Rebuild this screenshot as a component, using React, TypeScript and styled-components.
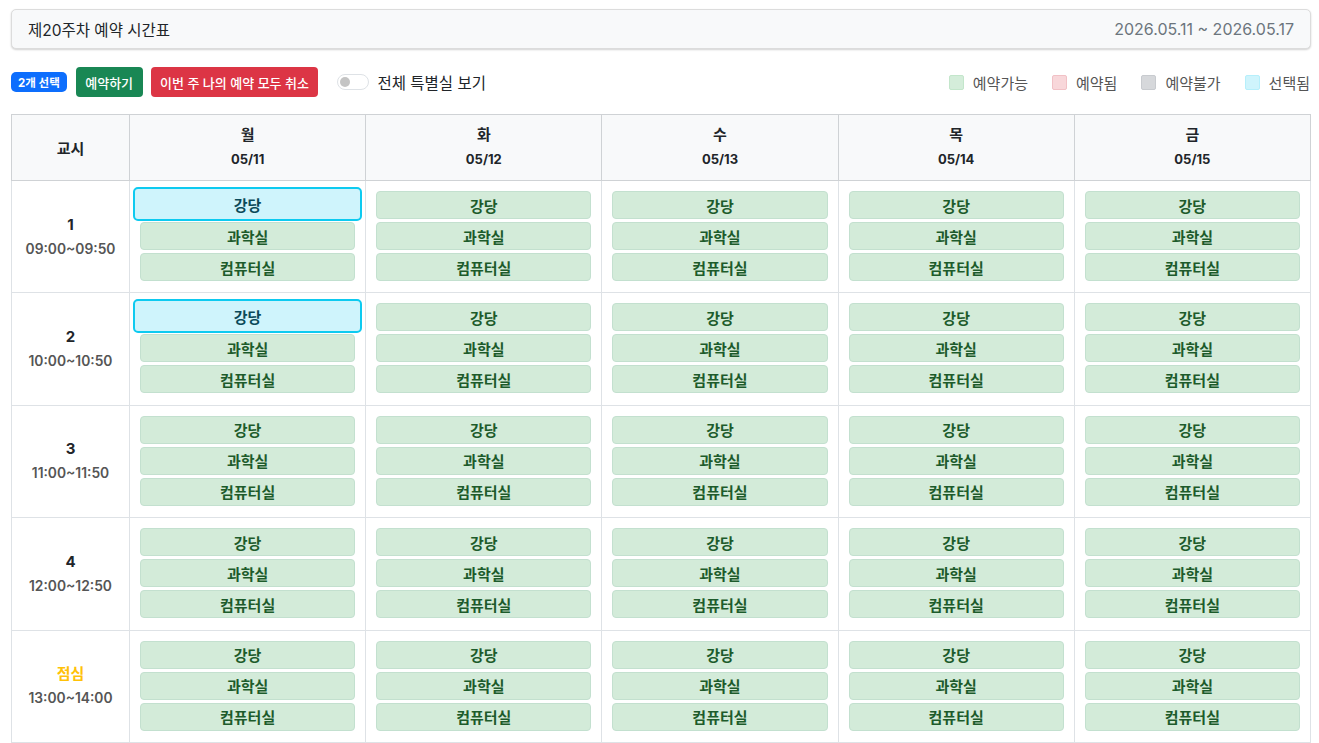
import styled, { createGlobalStyle } from 'styled-components';

const GlobalStyle = createGlobalStyle`
  body {
    margin: 0;
    background: #fff;
    font-family: Inter, 'Noto Sans CJK KR', sans-serif;
    color: #212529;
  }
`;

const Page = styled.div`
  padding: 9px 8px 0 11px;
`;

const HeaderCard = styled.div`
  height: 40px;
  box-sizing: border-box;
  display: flex;
  align-items: center;
  justify-content: space-between;
  padding: 0 16px;
  background: #f8f9fa;
  border: 1px solid #dcdcdc;
  border-radius: 5px;
  box-shadow: 0 1px 2px rgba(0, 0, 0, 0.18);
  .title {
    font-size: 15.5px;
    color: #212529;
  }
  .range {
    font-size: 16px;
    color: #6c757d;
  }
`;

const Toolbar = styled.div`
  margin-top: 18px;
  height: 30px;
  display: flex;
  align-items: center;
  justify-content: space-between;
`;

const Actions = styled.div`
  display: flex;
  align-items: center;
`;

const Badge = styled.span`
  height: 20px;
  padding: 0 7px;
  display: inline-flex;
  align-items: center;
  background: #0d6efd;
  color: #fff;
  font-size: 11.5px;
  font-weight: 700;
  border-radius: 5px;
  margin-right: 9px;
`;

const ActionButton = styled.button<{ $tone: 'success' | 'danger' }>`
  height: 30px;
  padding: 0 9.5px;
  border: 0;
  border-radius: 4px;
  font-family: inherit;
  font-size: 13px;
  font-weight: 500;
  color: #fff;
  background: ${(p) => (p.$tone === 'success' ? '#198754' : '#dc3545')};
  margin-right: 8px;
  cursor: pointer;
`;

const SwitchLabel = styled.label`
  display: flex;
  align-items: center;
  margin-left: 11px;
  font-size: 15.5px;
  color: #212529;
  .track {
    width: 32px;
    height: 16px;
    box-sizing: border-box;
    border: 1px solid #dee2e6;
    border-radius: 8px;
    display: flex;
    align-items: center;
    padding-left: 2px;
    margin-right: 8px;
  }
  .knob {
    width: 10px;
    height: 10px;
    border-radius: 50%;
    background: #c4c4c4;
  }
`;

const Legend = styled.div`
  display: flex;
  align-items: center;
  gap: 24px;
  padding-right: 1px;
`;

const LegendItem = styled.div<{ $bg: string; $border: string }>`
  display: flex;
  align-items: center;
  font-size: 15px;
  color: #555;
  &::before {
    content: '';
    width: 15px;
    height: 15px;
    box-sizing: border-box;
    background: ${(p) => p.$bg};
    border: 1px solid ${(p) => p.$border};
    border-radius: 2px;
    margin-right: 9px;
  }
`;

const Table = styled.table`
  margin-top: 17px;
  width: 1300px;
  border-collapse: collapse;
  table-layout: fixed;
  th,
  td {
    border: 1px solid #dee2e6;
  }
  thead th {
    background: #f8f9fa;
    border-color: #cfd2d5;
    padding: 8px 0;
    text-align: center;
    font-size: 15px;
    font-weight: 700;
    color: #212529;
  }
`;

const DayName = styled.div`
  line-height: 24px;
  font-size: 15px;
`;

const DayDate = styled.div`
  line-height: 25px;
  font-size: 13px;
`;

const PeriodCell = styled.td`
  text-align: center;
  vertical-align: middle;
`;

const PeriodName = styled.div<{ $lunch?: boolean }>`
  font-size: 15px;
  font-weight: 700;
  line-height: 24px;
  color: ${(p) => (p.$lunch ? '#ffc107' : '#212529')};
`;

const PeriodTime = styled.div`
  font-size: 13.8px;
  font-weight: 600;
  color: #555;
  line-height: 24px;
`;

const SlotCell = styled.td`
  padding: 10px 10px 11px;
  height: 112.4px;
  box-sizing: border-box;
  vertical-align: top;
`;

const RoomList = styled.div`
  display: flex;
  flex-direction: column;
  gap: 3px;
`;

const RoomButton = styled.button<{ $selected?: boolean }>`
  height: ${(p) => (p.$selected ? '34px' : '28px')};
  margin: ${(p) => (p.$selected ? '-4px -7px -2px' : '0')};
  padding: 0;
  position: relative;
  box-sizing: border-box;
  border: ${(p) => (p.$selected ? '2px solid #0dcaf0' : '1px solid #c3e0cf')};
  border-radius: ${(p) => (p.$selected ? '5px' : '4px')};
  background: ${(p) => (p.$selected ? '#cff4fc' : '#d3ebd9')};
  color: ${(p) => (p.$selected ? '#0b4a5a' : '#1d5b2b')};
  font-family: inherit;
  font-size: 15px;
  font-weight: 700;
  cursor: pointer;
`;

const days = [
  { name: '월', date: '05/11' },
  { name: '화', date: '05/12' },
  { name: '수', date: '05/13' },
  { name: '목', date: '05/14' },
  { name: '금', date: '05/15' },
];

const periods = [
  { name: '1', time: '09:00~09:50' },
  { name: '2', time: '10:00~10:50' },
  { name: '3', time: '11:00~11:50' },
  { name: '4', time: '12:00~12:50' },
  { name: '점심', time: '13:00~14:00', lunch: true },
];

const rooms = ['강당', '과학실', '컴퓨터실'];

const selected = new Set(['0-0-0', '1-0-0']);

const App = () => {
  return (
    <Page>
      <GlobalStyle />
      <HeaderCard>
        <span className='title'>제20주차 예약 시간표</span>
        <span className='range'>2026.05.11 ~ 2026.05.17</span>
      </HeaderCard>
      <Toolbar>
        <Actions>
          <Badge>2개 선택</Badge>
          <ActionButton type='button' $tone='success'>
            예약하기
          </ActionButton>
          <ActionButton type='button' $tone='danger'>
            이번 주 나의 예약 모두 취소
          </ActionButton>
          <SwitchLabel>
            <span className='track'>
              <span className='knob' />
            </span>
            전체 특별실 보기
          </SwitchLabel>
        </Actions>
        <Legend>
          <LegendItem $bg='#d4edda' $border='#c3e6cb'>예약가능</LegendItem>
          <LegendItem $bg='#f8d7da' $border='#f1c1c6'>예약됨</LegendItem>
          <LegendItem $bg='#d6d8db' $border='#c8cbcf'>예약불가</LegendItem>
          <LegendItem $bg='#cff4fc' $border='#b6effb'>선택됨</LegendItem>
        </Legend>
      </Toolbar>
      <Table>
        <colgroup>
          <col style={{ width: 118 }} />
          {days.map((d) => (
            <col key={d.name} />
          ))}
        </colgroup>
        <thead>
          <tr>
            <th>교시</th>
            {days.map((d) => (
              <th key={d.name}>
                <DayName>{d.name}</DayName>
                <DayDate>{d.date}</DayDate>
              </th>
            ))}
          </tr>
        </thead>
        <tbody>
          {periods.map((p, pi) => (
            <tr key={p.name}>
              <PeriodCell>
                <PeriodName $lunch={p.lunch}>{p.name}</PeriodName>
                <PeriodTime>{p.time}</PeriodTime>
              </PeriodCell>
              {days.map((d, di) => (
                <SlotCell key={d.name}>
                  <RoomList>
                    {rooms.map((r, ri) => (
                      <RoomButton
                        type='button'
                        key={r}
                        $selected={selected.has(`${pi}-${di}-${ri}`)}
                      >
                        {r}
                      </RoomButton>
                    ))}
                  </RoomList>
                </SlotCell>
              ))}
            </tr>
          ))}
        </tbody>
      </Table>
    </Page>
  );
};

export default App;
